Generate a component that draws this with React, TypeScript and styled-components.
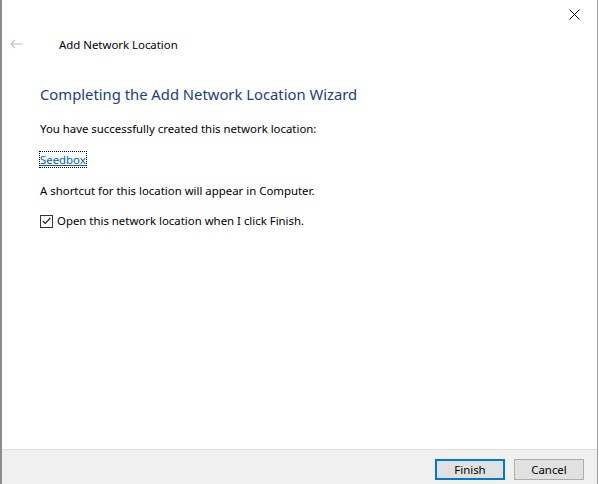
import styled, { createGlobalStyle } from 'styled-components';

const GlobalStyle = createGlobalStyle`
  html, body {
    margin: 0;
    padding: 0;
    background: #ffffff;
  }
  body {
    font-family: 'Segoe UI', 'Noto Sans', 'Open Sans', sans-serif;
    font-size: 11.4px;
    color: #000000;
  }
`;

const Wizard = () => (
  <>
    <GlobalStyle />
    <Window>
      <CloseRow>
        <CloseButton aria-label="Close">
          <svg width="11" height="11" viewBox="0 0 11 11">
            <path d="M0.5 0.5 L10.5 10.5 M10.5 0.5 L0.5 10.5" stroke="#000" strokeWidth="1" fill="none" />
          </svg>
        </CloseButton>
      </CloseRow>
      <NavBar>
        <BackButton aria-label="Back">
          <svg width="13" height="10" viewBox="0 0 13 10">
            <path d="M12.5 5 H1 M5 1 L1 5 L5 9" stroke="#c2c2c2" strokeWidth="1.1" fill="none" />
          </svg>
        </BackButton>
        <WindowTitle>Add Network Location</WindowTitle>
      </NavBar>
      <Content>
        <Heading>Completing the Add Network Location Wizard</Heading>
        <Line>You have successfully created this network location:</Line>
        <Line>
          <LocationLink href="#">Seedbox</LocationLink>
        </Line>
        <Line>A shortcut for this location will appear in Computer.</Line>
        <CheckRow>
          <CheckBox>
            <svg width="9" height="8" viewBox="0 0 9 8">
              <path d="M0.8 4 L3.3 6.5 L8.3 1" stroke="#222" strokeWidth="1.2" fill="none" />
            </svg>
          </CheckBox>
          Open this network location when I click Finish.
        </CheckRow>
      </Content>
      <Footer>
        <Button $primary>Finish</Button>
        <Button>Cancel</Button>
      </Footer>
    </Window>
  </>
);

export default Wizard;

const Window = styled.div`
  display: flex;
  flex-direction: column;
  width: 595px;
  height: 484px;
  border-left: 2px solid #8c8c8c;
  border-right: 1px solid #a0a0a0;
  background: #ffffff;
  box-sizing: content-box;
`;

const CloseRow = styled.div`
  display: flex;
  justify-content: flex-end;
  height: 29px;
`;

const CloseButton = styled.div`
  display: flex;
  align-items: center;
  justify-content: center;
  width: 46px;
  height: 29px;
`;

const NavBar = styled.div`
  display: flex;
  align-items: center;
  height: 30px;
`;

const BackButton = styled.div`
  display: flex;
  align-items: center;
  justify-content: center;
  width: 28px;
`;

const WindowTitle = styled.div`
  margin-left: 29px;
  color: #000000;
`;

const Content = styled.div`
  flex: 1;
  display: flex;
  flex-direction: column;
  padding: 24px 0 0 38px;
`;

const Heading = styled.div`
  font-size: 14.8px;
  color: #1b3c87;
  line-height: 22px;
  margin-bottom: 16px;
`;

const Line = styled.div`
  line-height: 16px;
  margin-bottom: 15px;
`;

const LocationLink = styled.a`
  color: #0063b1;
  text-decoration: underline;
  outline: 1px dotted #000;
  outline-offset: 0;
`;

const CheckRow = styled.label`
  display: flex;
  align-items: center;
  gap: 4px;
  line-height: 16px;
  margin-top: -1px;
`;

const CheckBox = styled.span`
  display: inline-flex;
  align-items: center;
  justify-content: center;
  width: 11px;
  height: 11px;
  border: 1px solid #333333;
  background: #ffffff;
`;

const Footer = styled.div`
  display: flex;
  justify-content: flex-end;
  gap: 9px;
  height: 35px;
  padding: 9px 13px 0 0;
  box-sizing: border-box;
  background: #f0f0f0;
  border-top: 1px solid #dfdfdf;
`;

const Button = styled.button<{ $primary?: boolean }>`
  width: 70px;
  height: 21px;
  padding: 0;
  font-family: inherit;
  font-size: 11.4px;
  color: #000000;
  background: #e1e1e1;
  border: ${({ $primary }) => ($primary ? '2px solid #0078d7' : '1px solid #adadad')};
  box-sizing: border-box;
`;
